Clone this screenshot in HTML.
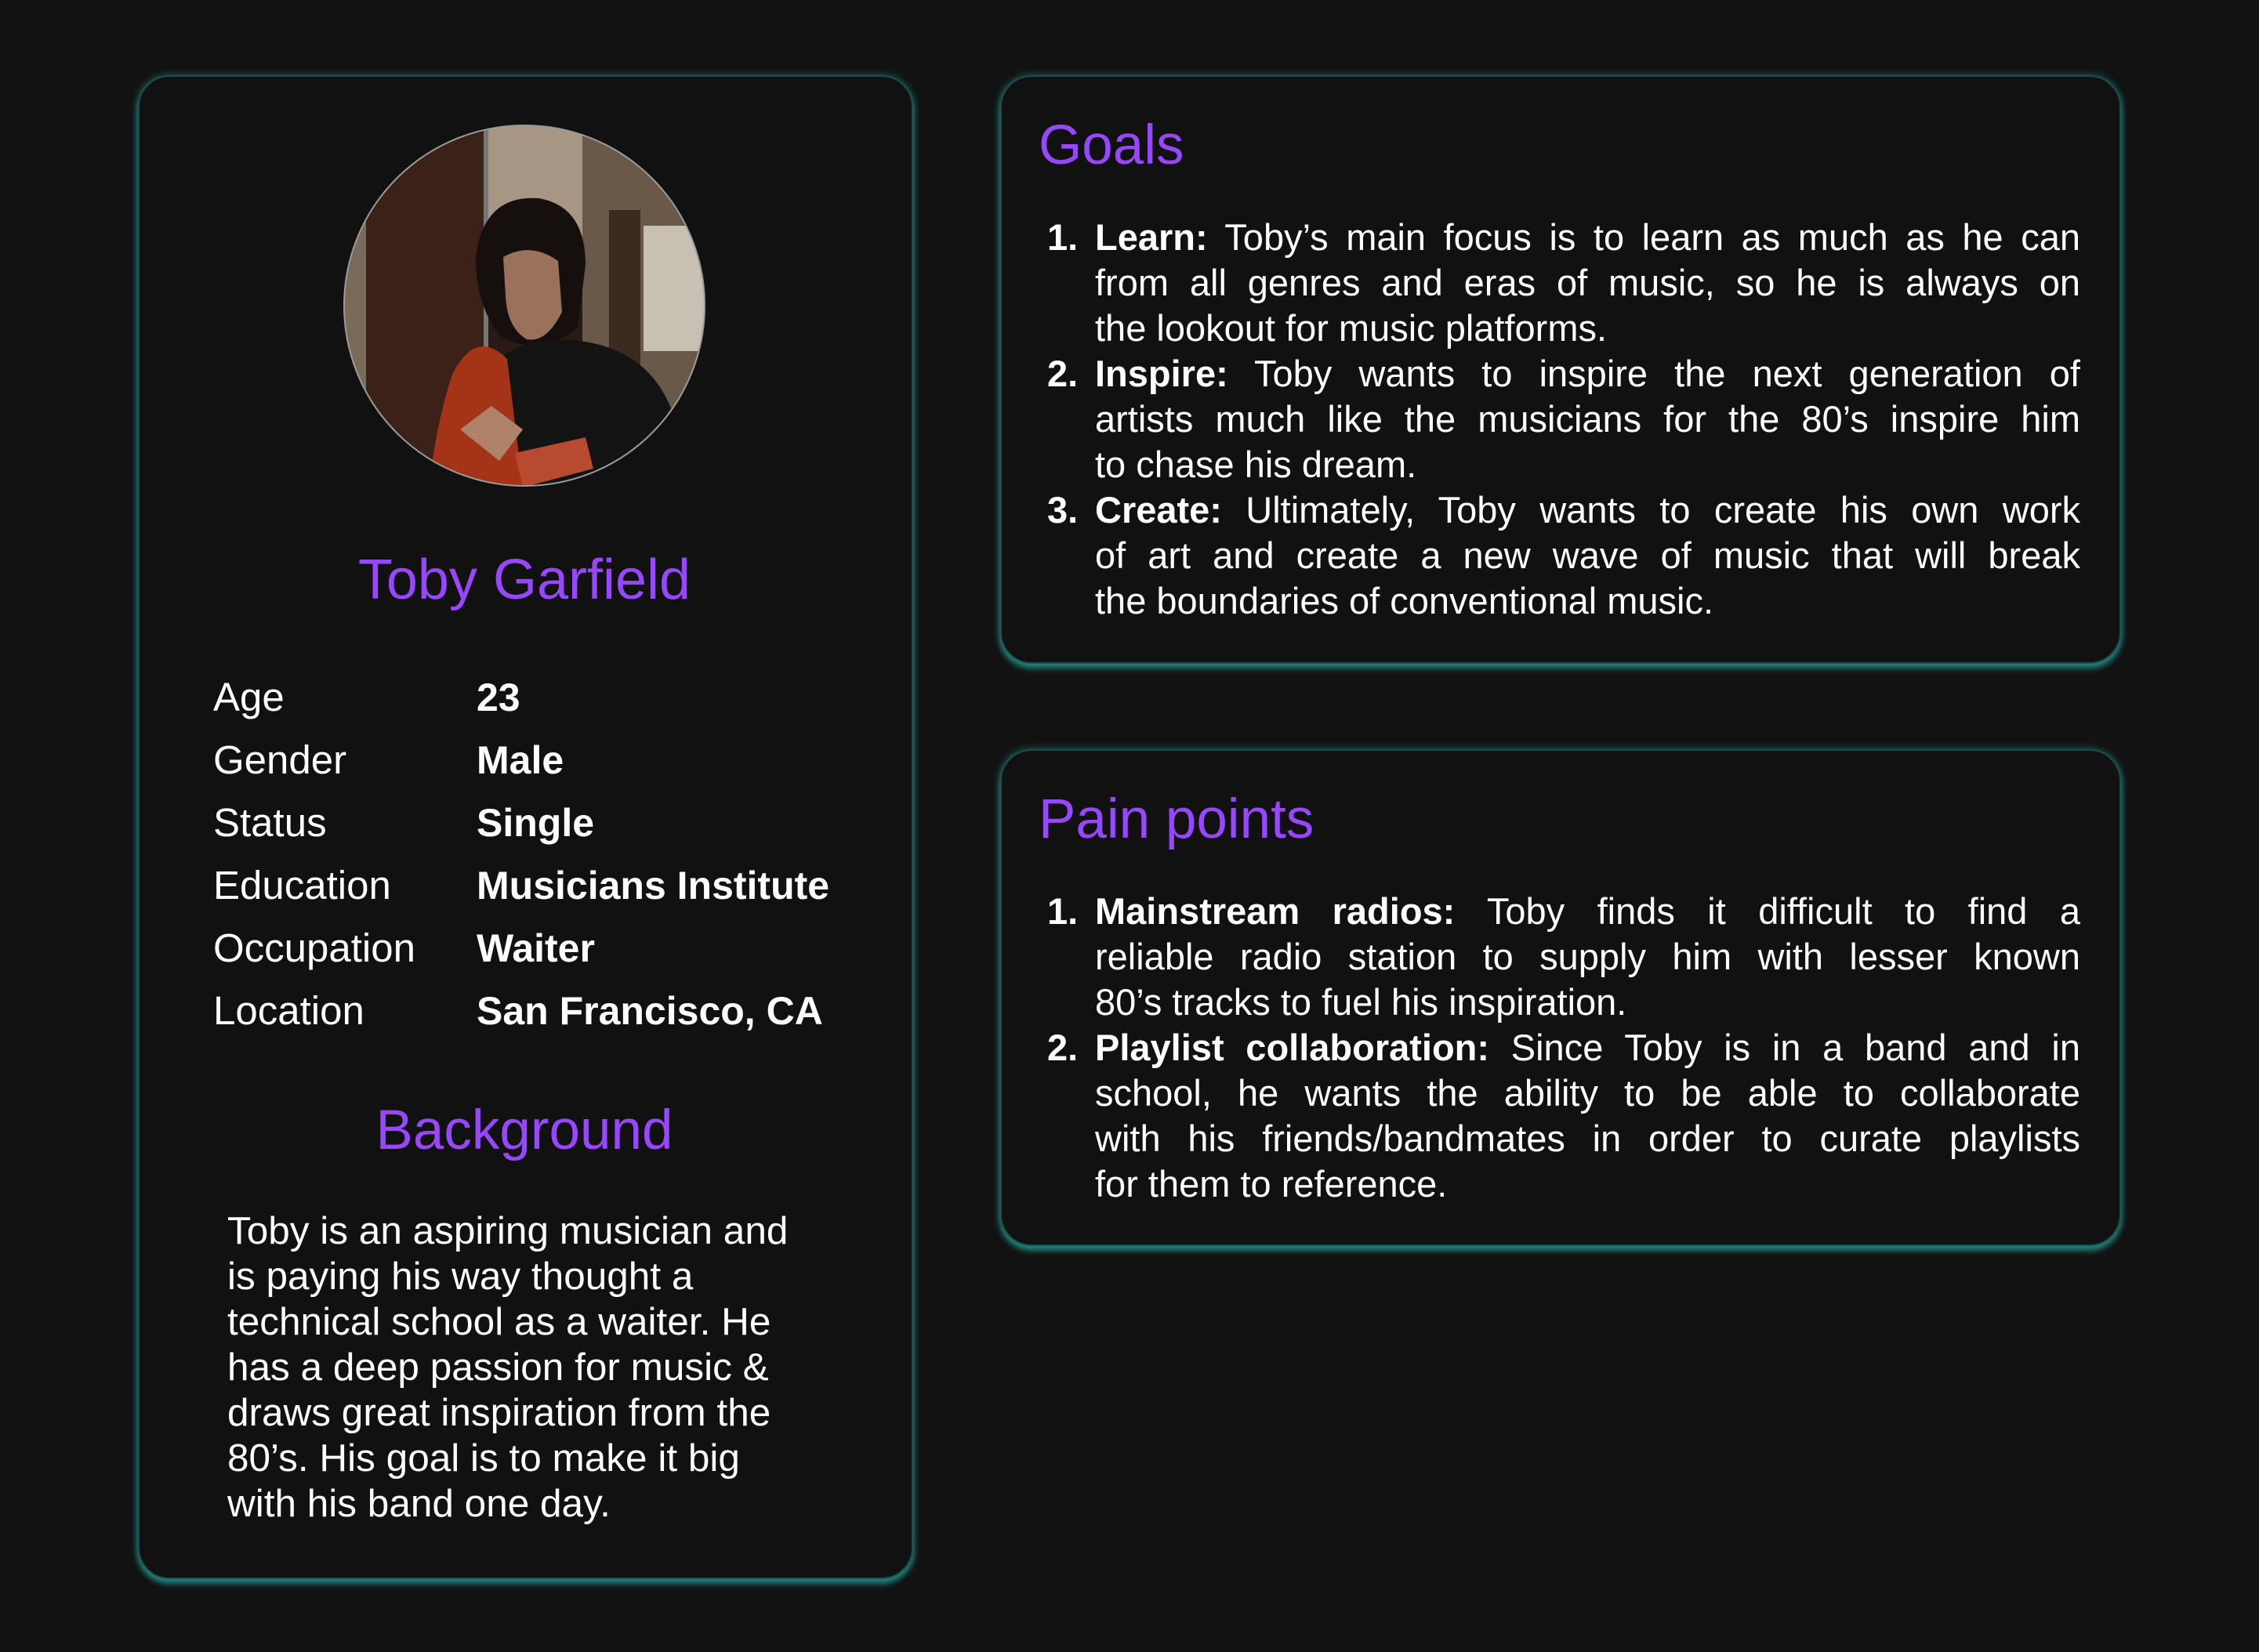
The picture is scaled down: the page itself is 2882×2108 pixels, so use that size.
<!DOCTYPE html>
<html><head><meta charset="utf-8"><style>
html,body{margin:0;padding:0}
body{width:2882px;height:2108px;background:#121212;position:relative;overflow:hidden;font-family:"Liberation Sans",sans-serif;color:#fff}
.card{position:absolute;background:#111;border-radius:40px;border:2px solid #1d4d4b;box-shadow:0 0 10px rgba(40,170,160,.55),0 6px 8px rgba(40,190,180,.6)}
.h{position:absolute;color:#9747ff;font-size:71px;line-height:80px;white-space:nowrap}
.row{position:absolute;font-size:51px;line-height:60px;white-space:nowrap}
.lbl{left:272px}.val{left:608px;font-weight:bold;font-size:50px}
.list{position:absolute;left:1336px;width:1318px;font-size:47px}
.ln{height:58px;line-height:58px;padding-left:61px;position:relative;white-space:nowrap}
.j{text-align:justify;text-align-last:justify;white-space:normal}
.n{position:absolute;left:0;font-weight:bold}
b{font-weight:bold}
.bg{position:absolute;left:290px;top:1542px;font-size:49.5px;line-height:58px;white-space:nowrap}
</style></head><body>
<div class="card" style="left:176px;top:96px;width:985px;height:1915px"></div>
<div class="card" style="left:1276px;top:96px;width:1426px;height:747px"></div>
<div class="card" style="left:1276px;top:956px;width:1426px;height:630px"></div>

<svg style="position:absolute;left:437px;top:158px" width="464" height="464" viewBox="0 0 464 464">
<defs><clipPath id="c"><circle cx="232" cy="232" r="230"/></clipPath></defs>
<g clip-path="url(#c)">
<rect width="464" height="464" fill="#2a1a15"/>
<rect x="0" y="0" width="30" height="464" fill="#7a6a5a"/>
<rect x="30" y="0" width="150" height="464" fill="#3a2219"/>
<rect x="180" y="0" width="6" height="464" fill="#777"/>
<rect x="186" y="0" width="120" height="200" fill="#a89684"/>
<rect x="306" y="0" width="160" height="464" fill="#6a5848"/>
<rect x="340" y="110" width="40" height="200" fill="#3a2a20"/>
<rect x="384" y="130" width="80" height="160" fill="#c9c0b4"/>
<path d="M170 170 Q180 90 250 95 Q310 105 310 180 L300 260 Q250 300 200 270 Q170 230 170 170 Z" fill="#15100e"/>
<path d="M205 170 Q240 150 275 175 L280 240 Q260 280 235 275 Q210 260 208 220 Z" fill="#9a715a"/>
<path d="M170 330 Q220 260 320 280 Q410 300 430 400 L450 464 L160 464 Z" fill="#131313"/>
<path d="M140 320 Q170 260 210 300 L230 464 L110 464 Q120 380 140 320 Z" fill="#a33418"/>
<path d="M150 390 L190 360 L230 390 L200 430 Z" fill="#b0826a"/>
<path d="M220 420 L310 400 L320 440 L230 464 Z" fill="#b84a30"/>
</g>
<circle cx="232" cy="232" r="230" fill="none" stroke="#9a9a9a" stroke-width="2"/>
</svg>

<div class="h" style="left:0;width:1338px;text-align:center;top:700px;font-size:72px">Toby Garfield</div>

<div class="row lbl" style="top:860px">Age</div><div class="row val" style="top:860px">23</div>
<div class="row lbl" style="top:940px">Gender</div><div class="row val" style="top:940px">Male</div>
<div class="row lbl" style="top:1020px">Status</div><div class="row val" style="top:1020px">Single</div>
<div class="row lbl" style="top:1100px">Education</div><div class="row val" style="top:1100px">Musicians Institute</div>
<div class="row lbl" style="top:1180px">Occupation</div><div class="row val" style="top:1180px">Waiter</div>
<div class="row lbl" style="top:1260px">Location</div><div class="row val" style="top:1260px">San Francisco, CA</div>

<div class="h" style="left:0;width:1338px;text-align:center;top:1403px">Background</div>
<div class="bg">Toby is an aspiring musician and<br>is paying his way thought a<br>technical school as a waiter. He<br>has a deep passion for music &amp;<br>draws great inspiration from the<br>80’s. His goal is to make it big<br>with his band one day.</div>

<div class="h" style="left:1325px;top:146px">Goals</div>
<div class="list" style="top:274px">
<div class="ln j"><span class="n">1.</span><b>Learn:</b> Toby’s main focus is to learn as much as he can</div>
<div class="ln j">from all genres and eras of music, so he is always on</div>
<div class="ln">the lookout for music platforms.</div>
<div class="ln j"><span class="n">2.</span><b>Inspire:</b> Toby wants to inspire the next generation of</div>
<div class="ln j">artists much like the musicians for the 80’s inspire him</div>
<div class="ln">to chase his dream.</div>
<div class="ln j"><span class="n">3.</span><b>Create:</b> Ultimately, Toby wants to create his own work</div>
<div class="ln j">of art and create a new wave of music that will break</div>
<div class="ln">the boundaries of conventional music.</div>
</div>

<div class="h" style="left:1325px;top:1006px">Pain points</div>
<div class="list" style="top:1134px">
<div class="ln j"><span class="n">1.</span><b>Mainstream radios:</b> Toby finds it difficult to find a</div>
<div class="ln j">reliable radio station to supply him with lesser known</div>
<div class="ln">80’s tracks to fuel his inspiration.</div>
<div class="ln j"><span class="n">2.</span><b>Playlist collaboration:</b> Since Toby is in a band and in</div>
<div class="ln j">school, he wants the ability to be able to collaborate</div>
<div class="ln j">with his friends/bandmates in order to curate playlists</div>
<div class="ln">for them to reference.</div>
</div>
</body></html>
